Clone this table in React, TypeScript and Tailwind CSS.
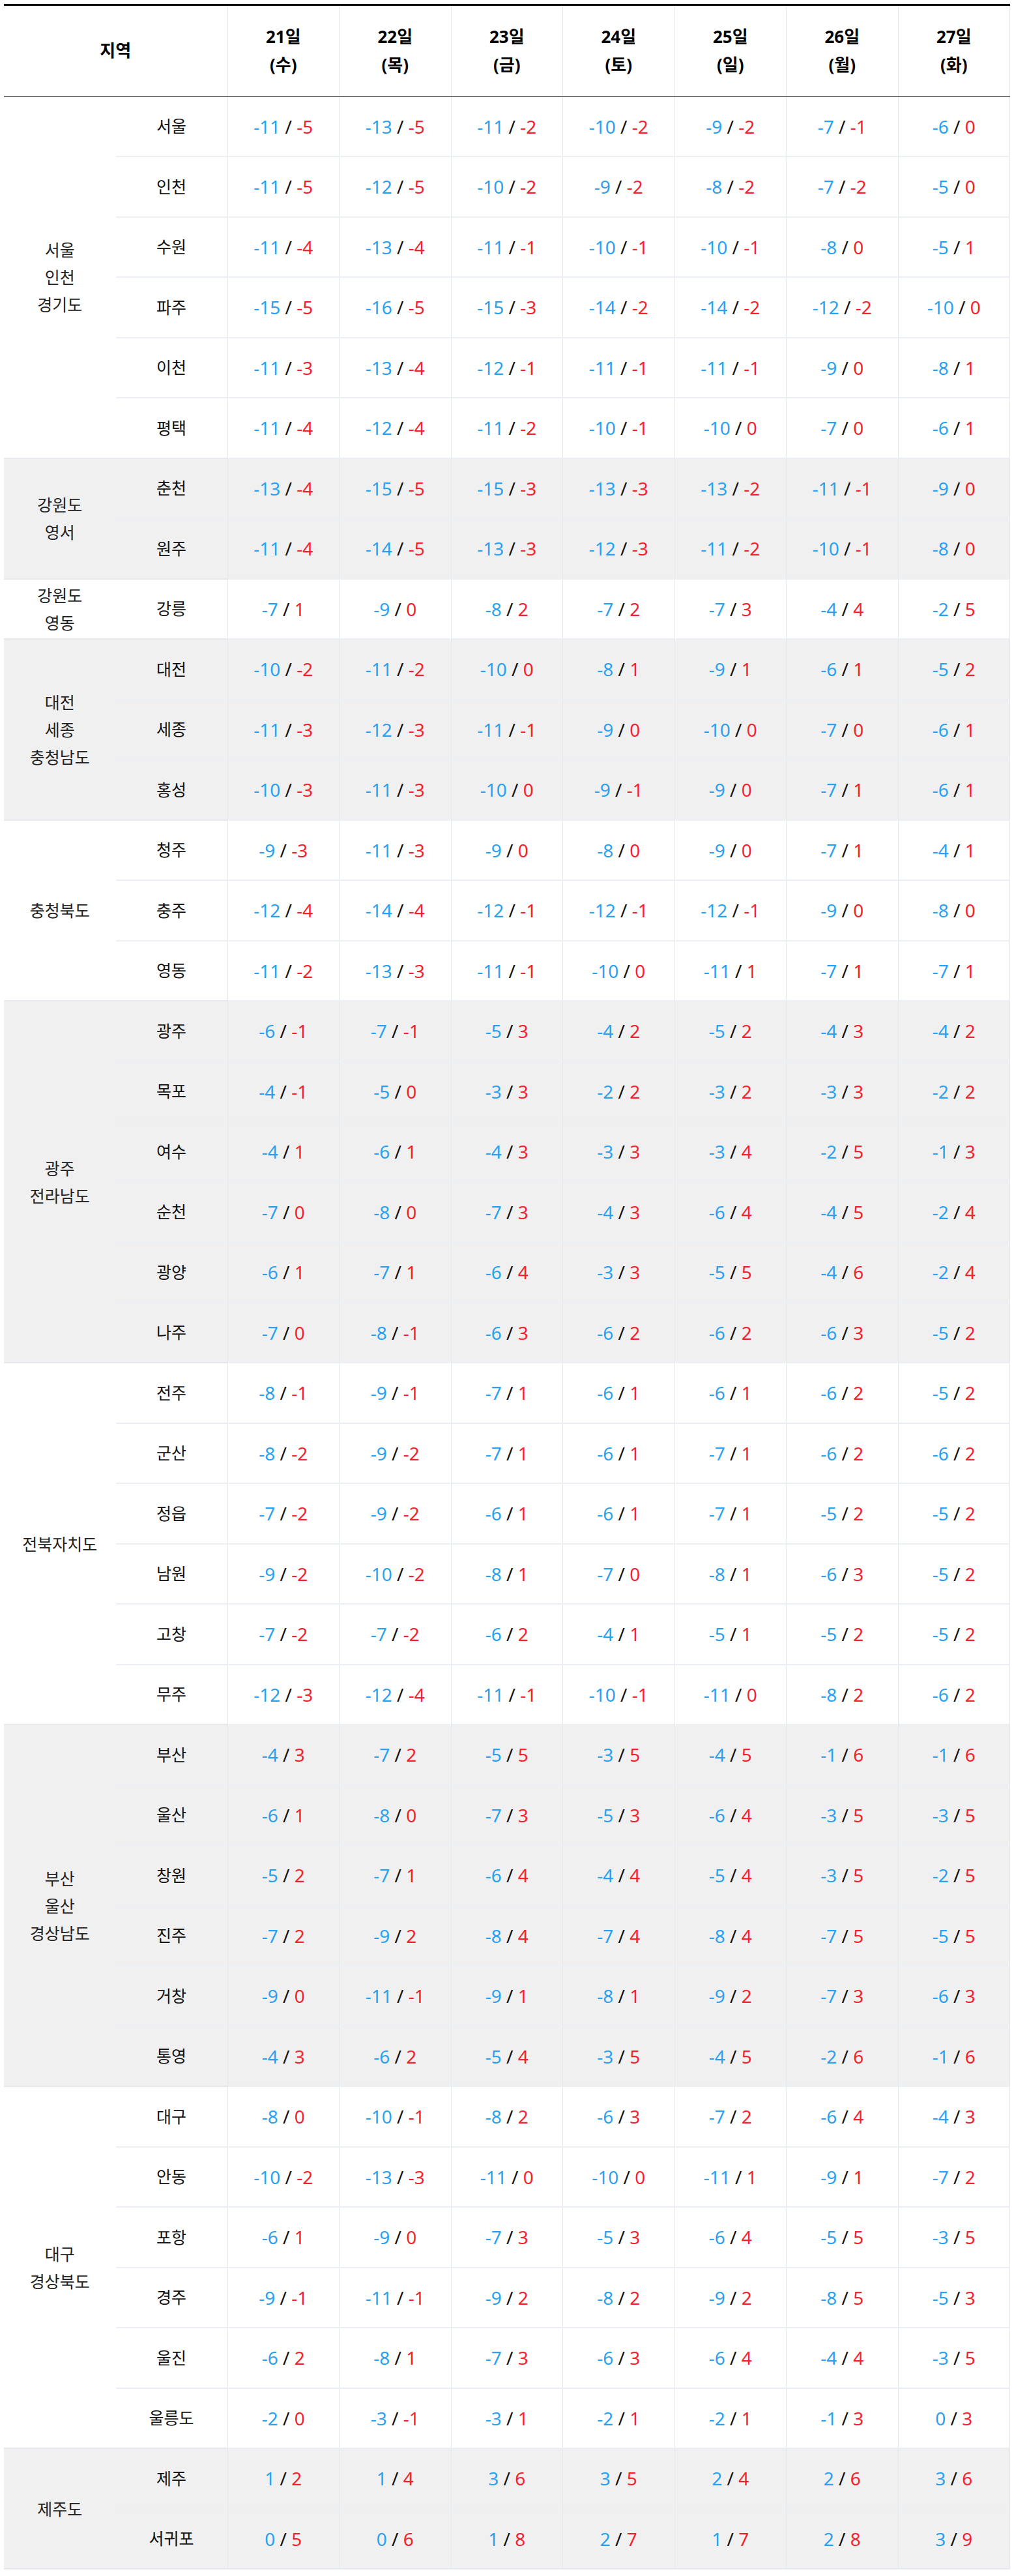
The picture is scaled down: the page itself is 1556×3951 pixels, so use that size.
type Temp = [number, number];

interface Group {
  region: string[];
  rows: { city: string; temps: Temp[] }[];
}

const days = [
  { date: "21일", dow: "(수)" },
  { date: "22일", dow: "(목)" },
  { date: "23일", dow: "(금)" },
  { date: "24일", dow: "(토)" },
  { date: "25일", dow: "(일)" },
  { date: "26일", dow: "(월)" },
  { date: "27일", dow: "(화)" },
];

const groups: Group[] = [
  {
    region: ["서울", "인천", "경기도"],
    rows: [
      { city: "서울", temps: [[-11, -5], [-13, -5], [-11, -2], [-10, -2], [-9, -2], [-7, -1], [-6, 0]] },
      { city: "인천", temps: [[-11, -5], [-12, -5], [-10, -2], [-9, -2], [-8, -2], [-7, -2], [-5, 0]] },
      { city: "수원", temps: [[-11, -4], [-13, -4], [-11, -1], [-10, -1], [-10, -1], [-8, 0], [-5, 1]] },
      { city: "파주", temps: [[-15, -5], [-16, -5], [-15, -3], [-14, -2], [-14, -2], [-12, -2], [-10, 0]] },
      { city: "이천", temps: [[-11, -3], [-13, -4], [-12, -1], [-11, -1], [-11, -1], [-9, 0], [-8, 1]] },
      { city: "평택", temps: [[-11, -4], [-12, -4], [-11, -2], [-10, -1], [-10, 0], [-7, 0], [-6, 1]] },
    ],
  },
  {
    region: ["강원도", "영서"],
    rows: [
      { city: "춘천", temps: [[-13, -4], [-15, -5], [-15, -3], [-13, -3], [-13, -2], [-11, -1], [-9, 0]] },
      { city: "원주", temps: [[-11, -4], [-14, -5], [-13, -3], [-12, -3], [-11, -2], [-10, -1], [-8, 0]] },
    ],
  },
  {
    region: ["강원도", "영동"],
    rows: [
      { city: "강릉", temps: [[-7, 1], [-9, 0], [-8, 2], [-7, 2], [-7, 3], [-4, 4], [-2, 5]] },
    ],
  },
  {
    region: ["대전", "세종", "충청남도"],
    rows: [
      { city: "대전", temps: [[-10, -2], [-11, -2], [-10, 0], [-8, 1], [-9, 1], [-6, 1], [-5, 2]] },
      { city: "세종", temps: [[-11, -3], [-12, -3], [-11, -1], [-9, 0], [-10, 0], [-7, 0], [-6, 1]] },
      { city: "홍성", temps: [[-10, -3], [-11, -3], [-10, 0], [-9, -1], [-9, 0], [-7, 1], [-6, 1]] },
    ],
  },
  {
    region: ["충청북도"],
    rows: [
      { city: "청주", temps: [[-9, -3], [-11, -3], [-9, 0], [-8, 0], [-9, 0], [-7, 1], [-4, 1]] },
      { city: "충주", temps: [[-12, -4], [-14, -4], [-12, -1], [-12, -1], [-12, -1], [-9, 0], [-8, 0]] },
      { city: "영동", temps: [[-11, -2], [-13, -3], [-11, -1], [-10, 0], [-11, 1], [-7, 1], [-7, 1]] },
    ],
  },
  {
    region: ["광주", "전라남도"],
    rows: [
      { city: "광주", temps: [[-6, -1], [-7, -1], [-5, 3], [-4, 2], [-5, 2], [-4, 3], [-4, 2]] },
      { city: "목포", temps: [[-4, -1], [-5, 0], [-3, 3], [-2, 2], [-3, 2], [-3, 3], [-2, 2]] },
      { city: "여수", temps: [[-4, 1], [-6, 1], [-4, 3], [-3, 3], [-3, 4], [-2, 5], [-1, 3]] },
      { city: "순천", temps: [[-7, 0], [-8, 0], [-7, 3], [-4, 3], [-6, 4], [-4, 5], [-2, 4]] },
      { city: "광양", temps: [[-6, 1], [-7, 1], [-6, 4], [-3, 3], [-5, 5], [-4, 6], [-2, 4]] },
      { city: "나주", temps: [[-7, 0], [-8, -1], [-6, 3], [-6, 2], [-6, 2], [-6, 3], [-5, 2]] },
    ],
  },
  {
    region: ["전북자치도"],
    rows: [
      { city: "전주", temps: [[-8, -1], [-9, -1], [-7, 1], [-6, 1], [-6, 1], [-6, 2], [-5, 2]] },
      { city: "군산", temps: [[-8, -2], [-9, -2], [-7, 1], [-6, 1], [-7, 1], [-6, 2], [-6, 2]] },
      { city: "정읍", temps: [[-7, -2], [-9, -2], [-6, 1], [-6, 1], [-7, 1], [-5, 2], [-5, 2]] },
      { city: "남원", temps: [[-9, -2], [-10, -2], [-8, 1], [-7, 0], [-8, 1], [-6, 3], [-5, 2]] },
      { city: "고창", temps: [[-7, -2], [-7, -2], [-6, 2], [-4, 1], [-5, 1], [-5, 2], [-5, 2]] },
      { city: "무주", temps: [[-12, -3], [-12, -4], [-11, -1], [-10, -1], [-11, 0], [-8, 2], [-6, 2]] },
    ],
  },
  {
    region: ["부산", "울산", "경상남도"],
    rows: [
      { city: "부산", temps: [[-4, 3], [-7, 2], [-5, 5], [-3, 5], [-4, 5], [-1, 6], [-1, 6]] },
      { city: "울산", temps: [[-6, 1], [-8, 0], [-7, 3], [-5, 3], [-6, 4], [-3, 5], [-3, 5]] },
      { city: "창원", temps: [[-5, 2], [-7, 1], [-6, 4], [-4, 4], [-5, 4], [-3, 5], [-2, 5]] },
      { city: "진주", temps: [[-7, 2], [-9, 2], [-8, 4], [-7, 4], [-8, 4], [-7, 5], [-5, 5]] },
      { city: "거창", temps: [[-9, 0], [-11, -1], [-9, 1], [-8, 1], [-9, 2], [-7, 3], [-6, 3]] },
      { city: "통영", temps: [[-4, 3], [-6, 2], [-5, 4], [-3, 5], [-4, 5], [-2, 6], [-1, 6]] },
    ],
  },
  {
    region: ["대구", "경상북도"],
    rows: [
      { city: "대구", temps: [[-8, 0], [-10, -1], [-8, 2], [-6, 3], [-7, 2], [-6, 4], [-4, 3]] },
      { city: "안동", temps: [[-10, -2], [-13, -3], [-11, 0], [-10, 0], [-11, 1], [-9, 1], [-7, 2]] },
      { city: "포항", temps: [[-6, 1], [-9, 0], [-7, 3], [-5, 3], [-6, 4], [-5, 5], [-3, 5]] },
      { city: "경주", temps: [[-9, -1], [-11, -1], [-9, 2], [-8, 2], [-9, 2], [-8, 5], [-5, 3]] },
      { city: "울진", temps: [[-6, 2], [-8, 1], [-7, 3], [-6, 3], [-6, 4], [-4, 4], [-3, 5]] },
      { city: "울릉도", temps: [[-2, 0], [-3, -1], [-3, 1], [-2, 1], [-2, 1], [-1, 3], [0, 3]] },
    ],
  },
  {
    region: ["제주도"],
    rows: [
      { city: "제주", temps: [[1, 2], [1, 4], [3, 6], [3, 5], [2, 4], [2, 6], [3, 6]] },
      { city: "서귀포", temps: [[0, 5], [0, 6], [1, 8], [2, 7], [1, 7], [2, 8], [3, 9]] },
    ],
  },
];

function TempCell({ temp, first, last }: { temp: Temp; first: boolean; last: boolean }) {
  // 첫 행은 헤더 아래 선을 덮지 않도록 윗선 없음
  return (
    <td
      className={`border-l border-l-[#e3e7ee] text-center text-[28px] ${
        first ? "" : "border-t-2 border-t-[#eceff3]"
      } ${last ? "border-r border-r-[#e3e7ee]" : ""}`}
    >
      <span className="text-[#2aa1f0]">{temp[0]}</span>
      <span className="text-[#111]"> / </span>
      <span className="text-[#f5222d]">{temp[1]}</span>
    </td>
  );
}

export default function App() {
  return (
    <div className="bg-white px-[6px] pt-[6px] pb-[7px] font-['Noto_Sans','Noto_Sans_CJK_KR',sans-serif]">
      <table className="w-full table-fixed border-collapse">
        <thead>
          <tr>
            <th
              colSpan={2}
              className="h-[140px] border-t-[3px] border-t-[#111] border-b-2 border-b-[#777] text-[26px] font-bold text-black"
            >
              지역
            </th>
            {days.map((d, i) => (
              <th
                key={d.date}
                className={`border-t-[3px] border-t-[#111] border-b-2 border-b-[#777] border-l border-l-[#e3e7ee] text-[26px] font-bold leading-[43px] text-black ${
                  i === days.length - 1 ? "border-r border-r-[#e3e7ee]" : ""
                }`}
              >
                <div>{d.date}</div>
                <div>{d.dow}</div>
              </th>
            ))}
          </tr>
        </thead>
        <tbody className="border-b-2 border-b-[#e6e9ed]">
          {groups.map((g, gi) => {
            const bg = gi % 2 === 1 ? "bg-[#f0f0f0]" : "bg-white";
            return g.rows.map((r, ri) => {
              const firstRow = gi === 0 && ri === 0;
              return (
                <tr key={g.region.join("") + r.city} className={bg}>
                  {ri === 0 && (
                    <td
                      rowSpan={g.rows.length}
                      className={`text-center text-[25px] leading-[42px] text-[#222] ${
                        gi > 0 ? "border-t-2 border-t-[#e6e9ed]" : ""
                      }`}
                    >
                      {g.region.map((line) => (
                        <div key={line}>{line}</div>
                      ))}
                    </td>
                  )}
                  <td
                    className={`h-[92.5px] text-center text-[25px] text-[#111] ${
                      firstRow ? "" : ri === 0 ? "border-t-2 border-t-[#e6e9ed]" : "border-t-2 border-t-[#eceff3]"
                    }`}
                  >
                    {r.city}
                  </td>
                  {r.temps.map((t, ti) => (
                    <TempCell key={ti} temp={t} first={firstRow} last={ti === r.temps.length - 1} />
                  ))}
                </tr>
              );
            });
          })}
        </tbody>
      </table>
    </div>
  );
}
